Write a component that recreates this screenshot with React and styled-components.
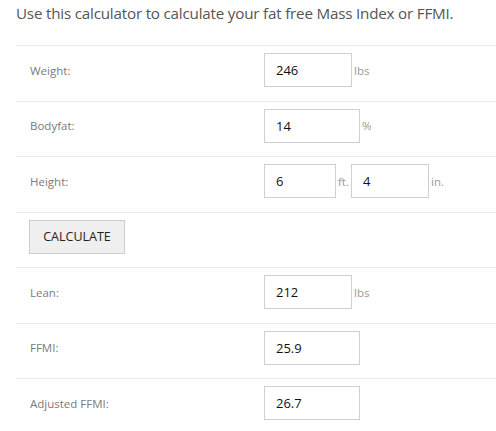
import React from "react";
import styled, { createGlobalStyle } from "styled-components";

const GlobalStyle = createGlobalStyle`
  html, body {
    margin: 0;
    padding: 0;
    background: #fff;
  }
  body {
    font-family: "Open Sans", "Noto Sans", Arial, sans-serif;
  }
`;

const Page = styled.div`
  padding: 0 0 0 16px;
  width: 480px;
`;

const Intro = styled.p`
  margin: 0;
  padding-top: 3px;
  height: 45px;
  box-sizing: border-box;
  font-size: 15.2px;
  letter-spacing: -0.2px;
  color: #555;
  white-space: nowrap;
`;

const Table = styled.div`
  display: flex;
  flex-direction: column;
`;

const Row = styled.div`
  display: grid;
  grid-template-columns: 248px 1fr;
  align-items: center;
  box-sizing: border-box;
  height: 55.5px;
  border-top: 1px solid #ececec;
  padding-bottom: 6px;
`;

const Label = styled.div`
  padding-left: 14px;
  font-size: 11.5px;
  color: #7a7a7a;
`;

const Field = styled.div`
  display: flex;
  align-items: center;
`;

const Input = styled.input`
  box-sizing: border-box;
  width: ${(p) => p.w}px;
  height: 34px;
  border: 1px solid #cfcfcf;
  padding: 0 0 0 11px;
  font-family: inherit;
  font-size: 13px;
  color: #111;
  background: #fff;
  outline: none;
`;

const Unit = styled.span`
  font-size: 11.5px;
  color: #9a9a9a;
  margin: 0 ${(p) => p.gap || 0}px 0 2px;
`;

const ButtonCell = styled.div`
  padding-left: 13px;
`;

const Button = styled.button`
  box-sizing: border-box;
  width: 96px;
  height: 34px;
  background: #efefef;
  border: 1px solid #cdcdcd;
  font-family: inherit;
  font-size: 12.5px;
  color: #222;
  cursor: pointer;
`;

const rows = [
  { label: "Weight:", fields: [{ v: "246", w: 88, unit: "lbs" }] },
  { label: "Bodyfat:", fields: [{ v: "14", w: 96, unit: "%" }] },
  {
    label: "Height:",
    fields: [
      { v: "6", w: 72, unit: "ft.", gap: 2 },
      { v: "4", w: 78, unit: "in." },
    ],
  },
];

const results = [
  { label: "Lean:", fields: [{ v: "212", w: 88, unit: "lbs" }] },
  { label: "FFMI:", fields: [{ v: "25.9", w: 96 }] },
  { label: "Adjusted FFMI:", fields: [{ v: "26.7", w: 96 }] },
];

const FieldRow = ({ label, fields }) => (
  <Row>
    <Label>{label}</Label>
    <Field>
      {fields.map((f, i) => (
        <React.Fragment key={i}>
          <Input w={f.w} defaultValue={f.v} />
          {f.unit && <Unit gap={f.gap}>{f.unit}</Unit>}
        </React.Fragment>
      ))}
    </Field>
  </Row>
);

const App = () => (
  <Page>
    <GlobalStyle />
    <Intro>Use this calculator to calculate your fat free Mass Index or FFMI.</Intro>
    <Table>
      {rows.map((r) => (
        <FieldRow key={r.label} {...r} />
      ))}
      <Row>
        <ButtonCell>
          <Button>CALCULATE</Button>
        </ButtonCell>
      </Row>
      {results.map((r) => (
        <FieldRow key={r.label} {...r} />
      ))}
    </Table>
  </Page>
);

export default App;
